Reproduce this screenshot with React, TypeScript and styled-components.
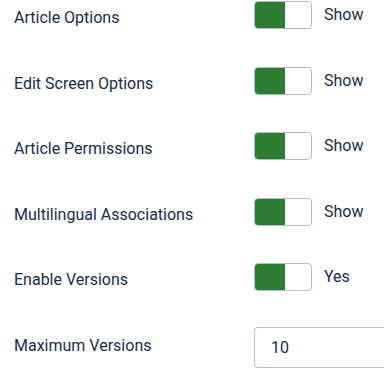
import styled, { createGlobalStyle } from "styled-components";

const GlobalStyle = createGlobalStyle`
    body {
        margin: 0;
        background: #ffffff;
        font-family: Roboto, "Noto Sans", sans-serif;
        color: #1a2b4c;
        overflow: hidden;
    }
`;

type Opcao = { rotulo: string; valor: string };

const opcoes: Opcao[] = [
    { rotulo: "Article Options", valor: "Show" },
    { rotulo: "Edit Screen Options", valor: "Show" },
    { rotulo: "Article Permissions", valor: "Show" },
    { rotulo: "Multilingual Associations", valor: "Show" },
    { rotulo: "Enable Versions", valor: "Yes" },
];

export default function App() {
    return (
        <>
            <GlobalStyle />
            <FormStl>
                {opcoes.map((op) => (
                    <LinhaStl key={op.rotulo}>
                        <RotuloStl>{op.rotulo}</RotuloStl>
                        <ControleStl>
                            <SwitchStl aria-checked="true" role="switch">
                                <MarcadorStl />
                            </SwitchStl>
                            <ValorStl>{op.valor}</ValorStl>
                        </ControleStl>
                    </LinhaStl>
                ))}
                <LinhaStl>
                    <RotuloStl>Maximum Versions</RotuloStl>
                    <CampoStl defaultValue="10" />
                </LinhaStl>
            </FormStl>
        </>
    );
}

const FormStl = styled.div`
    display: flex;
    flex-direction: column;
    gap: 37.5px;
    padding: 1px 0 0 14px;
`;

const LinhaStl = styled.div`
    display: grid;
    grid-template-columns: 240px 1fr;
    align-items: start;
`;

const RotuloStl = styled.label`
    font-size: 16px;
    line-height: 19px;
    padding-top: 7px;
    color: #1a2b4c;
`;

const ControleStl = styled.div`
    display: flex;
    align-items: center;
`;

const SwitchStl = styled.div`
    box-sizing: border-box;
    width: 58px;
    height: 28px;
    border: 1px solid #aebdcd;
    border-radius: 4px;
    background: #ffffff;
    display: flex;
    overflow: hidden;
`;

const MarcadorStl = styled.span`
    width: 30px;
    height: 100%;
    background: #2f7d32;
`;

const ValorStl = styled.span`
    margin-left: 12px;
    margin-top: -1px;
    font-size: 16px;
    color: #1a2b4c;
`;

const CampoStl = styled.input`
    box-sizing: border-box;
    margin-top: -2px;
    width: 130px;
    height: 41px;
    border: 1px solid #b8c4d2;
    border-right: none;
    border-radius: 4px 0 0 4px;
    padding: 0 16px;
    font-family: Roboto, "Noto Sans", sans-serif;
    font-size: 16px;
    color: #1a2b4c;
    outline: none;
`;
